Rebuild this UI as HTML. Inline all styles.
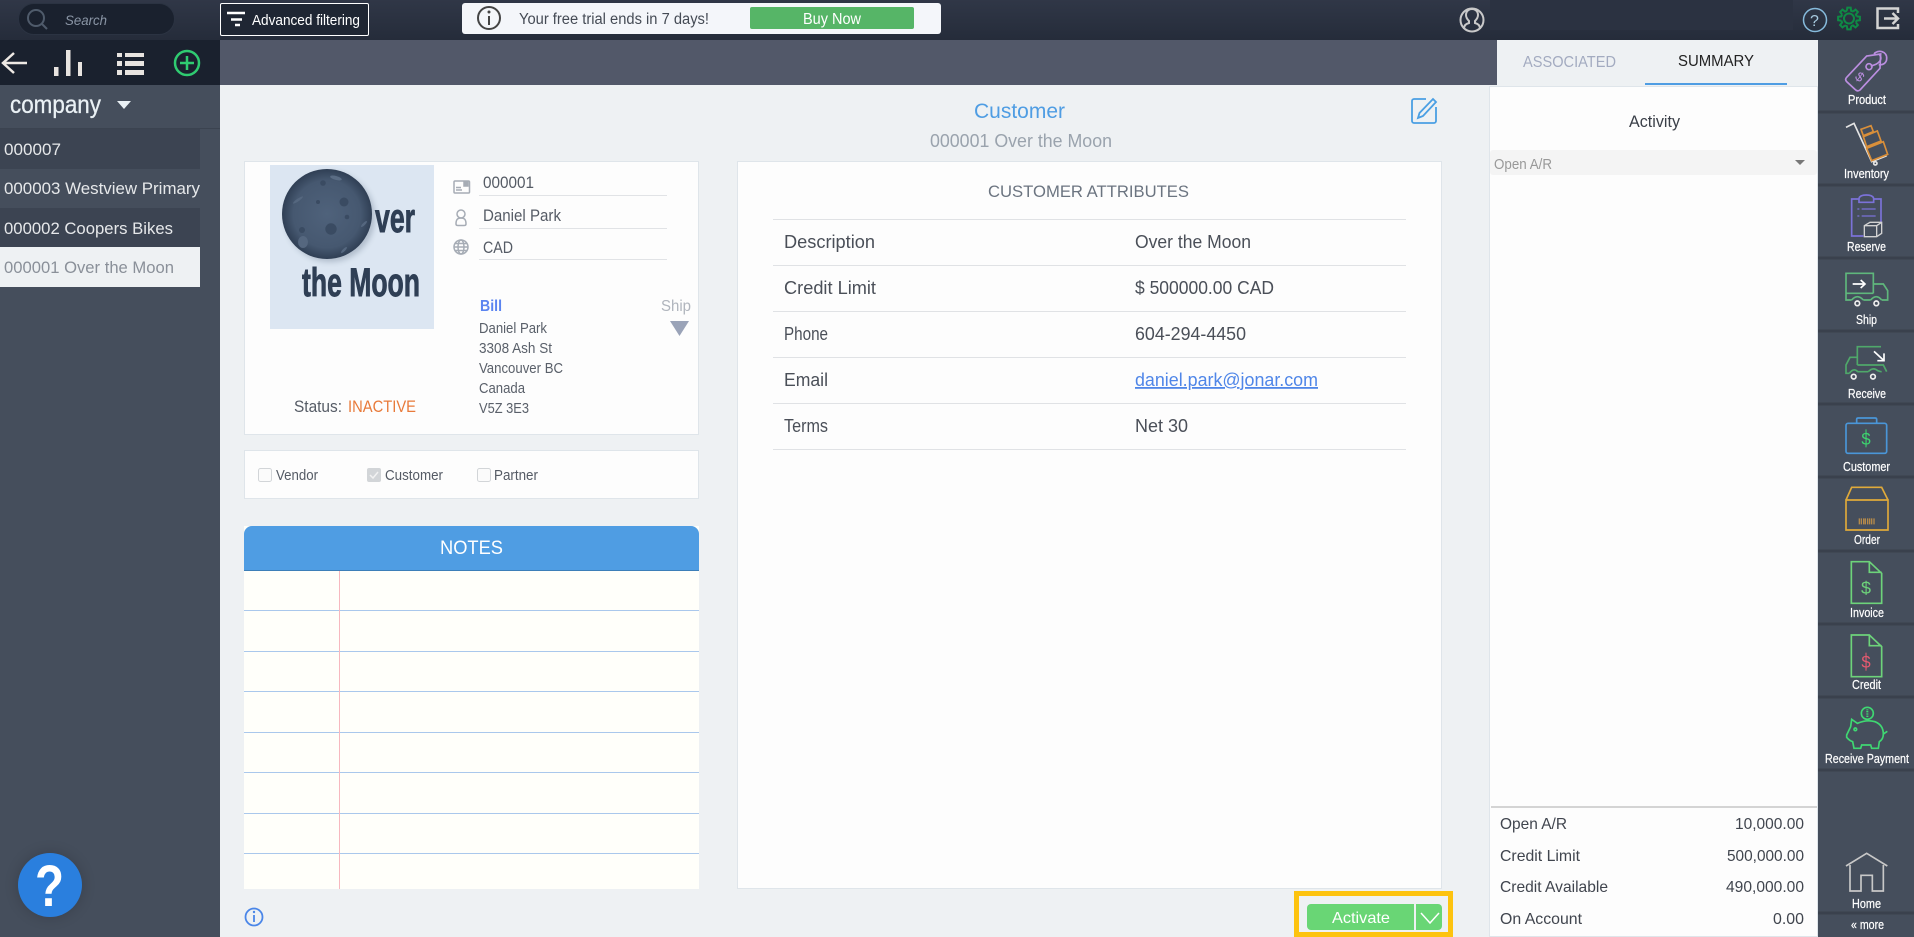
<!DOCTYPE html>
<html lang="en"><head><meta charset="utf-8"><title>Customer</title>
<style>
html,body{margin:0;padding:0;width:1914px;height:937px;overflow:hidden;background:#eef1f3}
.b{position:absolute;box-sizing:border-box}
svg{position:absolute;left:0;top:0}
text{font-family:"Liberation Sans",Arial,sans-serif}
</style></head><body>
<div class="b" style="left:0;top:0;width:1914px;height:40px;background:linear-gradient(#303747,#252c3a)"></div>
<div class="b" style="left:18px;top:3px;width:157px;height:32px;border-radius:16px;background:#1a212e;border:1px solid #2b3342"></div>
<div class="b" style="left:220px;top:3px;width:149px;height:33px;border:1px solid #fff;border-radius:2px;background:#1f2633"></div>
<div class="b" style="left:462px;top:3px;width:479px;height:31px;background:#f4f6fa;border-radius:3px"></div>
<div class="b" style="left:750px;top:7px;width:164px;height:22px;background:#56b567;border-radius:2px"></div>
<div class="b" style="left:1490px;top:0;width:303px;height:30px;background:#2b3241"></div>
<div class="b" style="left:220px;top:40px;width:1277px;height:45px;background:#525869"></div>
<div class="b" style="left:0;top:40px;width:220px;height:45px;background:#1a212e"></div>
<div class="b" style="left:0;top:85px;width:220px;height:852px;background:#454e5c"></div>
<div class="b" style="left:0;top:128px;width:220px;height:1px;background:#3b4350"></div>
<div class="b" style="left:0;top:129px;width:200px;height:40px;background:#3c4452"></div>
<div class="b" style="left:0;top:208px;width:200px;height:39px;background:#3c4452"></div>
<div class="b" style="left:0;top:247px;width:200px;height:40px;background:#eef1f3"></div>
<div class="b" style="left:244px;top:161px;width:455px;height:274px;background:#fdfdfd;border:1px solid #dfe5ea"></div>
<div class="b" style="left:270px;top:165px;width:164px;height:164px;background:#dce6f2"></div>
<div class="b" style="left:244px;top:450px;width:455px;height:49px;background:#fdfdfd;border:1px solid #dfe5ea"></div>
<div class="b" style="left:244px;top:526px;width:455px;height:363px;background:#fffffa"></div>
<div class="b" style="left:244px;top:526px;width:455px;height:45px;background:#4f9de3;border-radius:8px 8px 0 0;border-bottom:1px solid #3d7fb8"></div>
<div class="b" style="left:737px;top:161px;width:705px;height:728px;background:#fdfdfd;border:1px solid #dfe5ea"></div>
<div class="b" style="left:1489px;top:86px;width:329px;height:851px;background:#fdfdfd;border:1px solid #dfe5ea"></div>
<div class="b" style="left:1490px;top:150px;width:327px;height:25px;background:#f4f4f4;border-radius:3px"></div>
<div class="b" style="left:1491px;top:806px;width:326px;height:2px;background:#d4d4d4"></div>
<div class="b" style="left:1645px;top:83px;width:142px;height:2px;background:#4f9de3"></div>
<div class="b" style="left:1818px;top:40px;width:96px;height:897px;background:#454e5c"></div>
<div class="b" style="left:1294px;top:891px;width:159px;height:46px;border:5px solid #fdc30f"></div>
<div class="b" style="left:1307px;top:904px;width:135px;height:26px;background:#69d675;border-radius:4px"></div>
<div class="b" style="left:1414px;top:904px;width:2px;height:26px;background:#eef1f3"></div>
<div class="b" style="left:18px;top:853px;width:64px;height:64px;border-radius:50%;background:#2a7fde;box-shadow:0 0 14px rgba(0,0,0,.18)"></div>

<svg width="1914" height="937" viewBox="0 0 1914 937" xmlns="http://www.w3.org/2000/svg">
<defs>
<radialGradient id="m" cx="50%" cy="50%" r="52%"><stop offset="0" stop-color="#4f627b"/><stop offset=".72" stop-color="#465870"/><stop offset="1" stop-color="#2c3b50"/></radialGradient>
<filter id="bl" x="-30%" y="-30%" width="160%" height="160%"><feGaussianBlur stdDeviation="3"/></filter>
</defs>

<!-- top bar -->
<g fill="none" stroke="#4f5b6b" stroke-width="2"><circle cx="36" cy="18" r="8"/><path d="M42 24l5 5"/></g>
<text x="65" y="25" font-size="14" font-style="italic" fill="#8a95a5" textLength="42" lengthAdjust="spacingAndGlyphs">Search</text>
<path d="M227 13h18M231 19.500h11M235 25h5" stroke="#fff" stroke-width="2.500"/>
<text x="252" y="25" font-size="15" fill="#fff" textLength="108" lengthAdjust="spacingAndGlyphs">Advanced filtering</text>
<circle cx="489" cy="18" r="11" fill="none" stroke="#444" stroke-width="2"/><path d="M489 16v9" stroke="#444" stroke-width="2"/><circle cx="489" cy="12" r="1.500" fill="#444"/>
<text x="519" y="24" font-size="15.500" fill="#454b55" textLength="190" lengthAdjust="spacingAndGlyphs">Your free trial ends in 7 days!</text>
<text x="803" y="24" font-size="15.500" fill="#fff" textLength="58" lengthAdjust="spacingAndGlyphs">Buy Now</text>
<g fill="none" stroke="#c9c9c9" stroke-width="2"><circle cx="1472" cy="20" r="11.500"/><path d="M1464 29c0-4 2-5 5-6v-2c-2-2-3-4-3-6 0-4 3-6 6-6s6 2 6 6c0 2-1 4-3 6v2c3 1 5 2 5 6"/></g>
<circle cx="1815" cy="20" r="11.500" fill="none" stroke="#86bbdc" stroke-width="1.500"/>
<text x="1810" y="26" font-size="16" fill="#a8cbe0">?</text>
<g transform="translate(1849 18.500)" fill="none" stroke="#0f8a45" stroke-width="2">
<circle r="5"/>
<path id="tooth" d="M-2.100 -7.700L-1.700 -10.900H1.700L2.100 -7.700L4 -6.900"/>
<path d="M-2.100 -7.700L-1.700 -10.900H1.700L2.100 -7.700L4 -6.900" transform="rotate(45)"/>
<path d="M-2.100 -7.700L-1.700 -10.900H1.700L2.100 -7.700L4 -6.900" transform="rotate(90)"/>
<path d="M-2.100 -7.700L-1.700 -10.900H1.700L2.100 -7.700L4 -6.900" transform="rotate(135)"/>
<path d="M-2.100 -7.700L-1.700 -10.900H1.700L2.100 -7.700L4 -6.900" transform="rotate(180)"/>
<path d="M-2.100 -7.700L-1.700 -10.900H1.700L2.100 -7.700L4 -6.900" transform="rotate(225)"/>
<path d="M-2.100 -7.700L-1.700 -10.900H1.700L2.100 -7.700L4 -6.900" transform="rotate(270)"/>
<path d="M-2.100 -7.700L-1.700 -10.900H1.700L2.100 -7.700L4 -6.900" transform="rotate(315)"/>
</g>
<path d="M1898 13V8.500h-20.500v19.500H1898v-4M1884 18.500h14M1892.500 13l5.500 5.500-5.500 5.500" fill="none" stroke="#d4d4d4" stroke-width="2.500"/>

<!-- toolbar -->
<path d="M27 63H4M14 53L3 63l11 10" fill="none" stroke="#eee9e4" stroke-width="2.500"/>
<path d="M54 67h4.500v9H54zM66 50h4.500v26H66zM78 62h4v14h-4z" fill="#e8e4e0"/>
<path d="M117 53h5v4h-5zM125 53h19v4h-19zM117 61h5v5h-5zM125 61h19v5h-19zM117 70h5v5h-5zM125 70h19v5h-19z" fill="#e8e4e0"/>
<circle cx="187" cy="63" r="12" fill="none" stroke="#2fcb71" stroke-width="2.500"/><path d="M187 56v14M180 63h14" stroke="#2fcb71" stroke-width="2.500"/>

<!-- sidebar -->
<text x="10" y="113" font-size="25" fill="#eaf1f5" stroke="#eaf1f5" stroke-width=".3" textLength="91" lengthAdjust="spacingAndGlyphs">company</text>
<path d="M117 101h14l-7 8z" fill="#eaf1f5"/>
<g font-size="17" fill="#e6e8ea">
<text x="4" y="155" textLength="57" lengthAdjust="spacingAndGlyphs">000007</text>
<text x="4" y="194" textLength="196" lengthAdjust="spacingAndGlyphs">000003 Westview Primary</text>
<text x="4" y="234" textLength="169" lengthAdjust="spacingAndGlyphs">000002 Coopers Bikes</text>
<text x="4" y="273" textLength="170" lengthAdjust="spacingAndGlyphs" fill="#8a9099">000001 Over the Moon</text>
</g>

<!-- heading -->
<text x="974" y="118" font-size="21" fill="#4f9de3" textLength="91" lengthAdjust="spacingAndGlyphs">Customer</text>
<text x="930" y="147" font-size="18" fill="#9aa3ad" textLength="182" lengthAdjust="spacingAndGlyphs">000001 Over the Moon</text>
<g fill="none" stroke="#4a9fe3" stroke-width="1.800"><path d="M1426 99h-12a2 2 0 0 0-2 2v20a2 2 0 0 0 2 2h20a2 2 0 0 0 2-2v-14"/><path d="M1433 99l3 3-13 14-5 2 1.500-5z"/></g>

<!-- logo -->
<circle cx="330" cy="217" r="45" fill="#7c8a9c" opacity=".45" filter="url(#bl)"/>
<circle cx="327" cy="214" r="45" fill="url(#m)"/>
<g fill="#3a4b62"><circle cx="331" cy="229" r="5.700"/><circle cx="344" cy="202" r="4.500"/><circle cx="347" cy="217" r="2.300"/><circle cx="302" cy="230" r="3"/><ellipse cx="303" cy="242" rx="5" ry="6" fill="#55677f"/><circle cx="318" cy="202" r="2"/><circle cx="323" cy="183" r="2.800"/><ellipse cx="336" cy="178" rx="6" ry="2" fill="#5a6c84" transform="rotate(15 336 178)"/><ellipse cx="298" cy="200" rx="6" ry="1.300" fill="#55677f" transform="rotate(-35 298 200)"/><ellipse cx="364" cy="224" rx="4" ry="1.300" fill="#55677f" transform="rotate(-45 364 224)"/><ellipse cx="344" cy="250" rx="4" ry="1.300" fill="#55677f" transform="rotate(-45 344 250)"/></g>
<text x="375" y="232" font-size="41" font-weight="700" fill="#2f3f55" stroke="#2f3f55" stroke-width=".9" textLength="40" lengthAdjust="spacingAndGlyphs">ver</text>
<text x="302" y="296" font-size="40" font-weight="700" fill="#2f3f55" stroke="#2f3f55" stroke-width=".9" textLength="118" lengthAdjust="spacingAndGlyphs">the Moon</text>

<!-- fields -->
<g fill="none" stroke="#a6acb5" stroke-width="1.500">
<rect x="454" y="181" width="15.500" height="12" rx="1"/><path d="M456 190h6M456 187.500h5"/><rect x="464" y="182" width="4" height="4" fill="#a6acb5"/>
<circle cx="461" cy="214" r="4"/><path d="M456 224c0-5 2-6 5-6s5 1 5 6c0 1-1 1.500-2 1.500h-6c-1 0-2-.5-2-1.500z"/>
<circle cx="461" cy="247" r="7"/><ellipse cx="461" cy="247" rx="3" ry="7"/><path d="M454 247h14M455 243.500h12M455 250.500h12"/>
</g>
<g font-size="17" fill="#555b65">
<text x="483" y="188" textLength="51" lengthAdjust="spacingAndGlyphs">000001</text>
<text x="483" y="221" textLength="78" lengthAdjust="spacingAndGlyphs">Daniel Park</text>
<text x="483" y="253" textLength="30" lengthAdjust="spacingAndGlyphs">CAD</text>
</g>
<path d="M479 195.500h188M479 228.500h188M479 259.500h188" stroke="#e1e3e6"/>
<text x="480" y="311" font-size="16" font-weight="700" fill="#5b84f0" textLength="22" lengthAdjust="spacingAndGlyphs">Bill</text>
<text x="661" y="311" font-size="16" fill="#b0b5bd" textLength="30" lengthAdjust="spacingAndGlyphs">Ship</text>
<path d="M670 321h19l-9.500 15z" fill="#9aa3b8"/>
<g font-size="14.500" fill="#5a606a">
<text x="479" y="333" textLength="68" lengthAdjust="spacingAndGlyphs">Daniel Park</text>
<text x="479" y="353" textLength="73" lengthAdjust="spacingAndGlyphs">3308 Ash St</text>
<text x="479" y="373" textLength="84" lengthAdjust="spacingAndGlyphs">Vancouver BC</text>
<text x="479" y="393" textLength="46" lengthAdjust="spacingAndGlyphs">Canada</text>
<text x="479" y="413" textLength="50" lengthAdjust="spacingAndGlyphs">V5Z 3E3</text>
</g>
<text x="294" y="412" font-size="17" fill="#555b65" textLength="48" lengthAdjust="spacingAndGlyphs">Status:</text>
<text x="348" y="412" font-size="17" fill="#e87a3a" textLength="68" lengthAdjust="spacingAndGlyphs">INACTIVE</text>

<!-- checks -->
<rect x="258.500" y="468.500" width="13" height="13" rx="2" fill="#fbfbfb" stroke="#d2d5d8"/>
<rect x="367" y="468" width="14" height="14" rx="2" fill="#d2d5d8"/><path d="M370 475l3 3 5-6" fill="none" stroke="#f2f2f2" stroke-width="1.500"/>
<rect x="477.500" y="468.500" width="13" height="13" rx="2" fill="#fbfbfb" stroke="#d2d5d8"/>
<g font-size="14.500" fill="#555b65">
<text x="276" y="480" textLength="42" lengthAdjust="spacingAndGlyphs">Vendor</text>
<text x="385" y="480" textLength="58" lengthAdjust="spacingAndGlyphs">Customer</text>
<text x="494" y="480" textLength="44" lengthAdjust="spacingAndGlyphs">Partner</text>
</g>

<!-- notes -->
<text x="440" y="554" font-size="19" fill="#fff" textLength="63" lengthAdjust="spacingAndGlyphs">NOTES</text>
<path d="M244 610.500h455M244 651.500h455M244 691.500h455M244 732.500h455M244 772.500h455M244 813.500h455M244 853.500h455" stroke="#aac8ec"/>
<path d="M339.500 571v318" stroke="#f7b8bf"/>
<circle cx="254" cy="917" r="8.500" fill="none" stroke="#4a86e8" stroke-width="1.800"/><path d="M254 915v7" stroke="#4a86e8" stroke-width="1.800"/><circle cx="254" cy="912" r="1.200" fill="#4a86e8"/>
<text x="35" y="906" font-size="58" font-weight="700" fill="#fff" textLength="29" lengthAdjust="spacingAndGlyphs">?</text>

<!-- attributes -->
<text x="988" y="197" font-size="17" fill="#6b7480" textLength="201" lengthAdjust="spacingAndGlyphs">CUSTOMER ATTRIBUTES</text>
<path d="M773 219.500h633M773 265.500h633M773 311.500h633M773 357.500h633M773 403.500h633M773 449.500h633" stroke="#e0e2e5"/>
<g font-size="18" fill="#4a4f58">
<text x="784" y="248" textLength="91" lengthAdjust="spacingAndGlyphs">Description</text>
<text x="784" y="294" textLength="92" lengthAdjust="spacingAndGlyphs">Credit Limit</text>
<text x="784" y="340" textLength="44" lengthAdjust="spacingAndGlyphs">Phone</text>
<text x="784" y="386" textLength="44" lengthAdjust="spacingAndGlyphs">Email</text>
<text x="784" y="432" textLength="44" lengthAdjust="spacingAndGlyphs">Terms</text>
<text x="1135" y="248" textLength="116" lengthAdjust="spacingAndGlyphs">Over the Moon</text>
<text x="1135" y="294" textLength="139" lengthAdjust="spacingAndGlyphs">$ 500000.00 CAD</text>
<text x="1135" y="340" textLength="111" lengthAdjust="spacingAndGlyphs">604-294-4450</text>
<text x="1135" y="386" textLength="183" lengthAdjust="spacingAndGlyphs" fill="#4f86e8" text-decoration="underline">daniel.park@jonar.com</text>
<text x="1135" y="432" textLength="53" lengthAdjust="spacingAndGlyphs">Net 30</text>
</g>

<!-- right panel -->
<text x="1523" y="67" font-size="16" fill="#a3abc0" textLength="93" lengthAdjust="spacingAndGlyphs">ASSOCIATED</text>
<text x="1678" y="66" font-size="16" fill="#222" textLength="76" lengthAdjust="spacingAndGlyphs">SUMMARY</text>
<text x="1629" y="127" font-size="17" fill="#3a3f48" textLength="51" lengthAdjust="spacingAndGlyphs">Activity</text>
<text x="1494" y="169" font-size="14.500" fill="#999" textLength="58" lengthAdjust="spacingAndGlyphs">Open A/R</text>
<path d="M1795 160h10l-5 5z" fill="#777"/>
<g font-size="16" fill="#40454e">
<text x="1500" y="829" textLength="67" lengthAdjust="spacingAndGlyphs">Open A/R</text>
<text x="1500" y="861" textLength="80" lengthAdjust="spacingAndGlyphs">Credit Limit</text>
<text x="1500" y="892" textLength="108" lengthAdjust="spacingAndGlyphs">Credit Available</text>
<text x="1500" y="924" textLength="82" lengthAdjust="spacingAndGlyphs">On Account</text>
<text x="1735" y="829" textLength="69" lengthAdjust="spacingAndGlyphs">10,000.00</text>
<text x="1727" y="861" textLength="77" lengthAdjust="spacingAndGlyphs">500,000.00</text>
<text x="1726" y="892" textLength="78" lengthAdjust="spacingAndGlyphs">490,000.00</text>
<text x="1773" y="924" textLength="31" lengthAdjust="spacingAndGlyphs">0.00</text>
</g>
<text x="1332" y="923" font-size="16" fill="#fff" textLength="58" lengthAdjust="spacingAndGlyphs">Activate</text>
<path d="M1421 913l9 10 9-10" fill="none" stroke="#fff" stroke-width="1.500"/>

<!-- right nav dividers -->
<path d="M1818 112h96M1818 185h96M1818 258h96M1818 331h96M1818 404h96M1818 477h96M1818 551h96M1818 624h96M1818 697h96M1818 770h96M1818 913h96" stroke="#3a414d" stroke-width="3"/>

<!-- nav icons, in 3x zoomed coordinates -->
<g transform="translate(1800 40) scale(.33333)" fill="none" stroke-width="5">
<g stroke="#bb8ee0"><path d="M140 112L200 48l42-6-2 43-60 65q-8 6-15-2l-25-23q-6-7 0-13z"/><circle cx="207" cy="80" r="9"/><path d="M212 78c25-5 38-20 26-35M222 42c12-15 40-8 38 14 0 12-10 20-24 18"/></g>
<text x="168" y="126" font-size="40" fill="#bb8ee0" stroke="none" transform="rotate(38 182 112)">$</text>
</g>
<g transform="translate(1800 40) scale(.33333)" fill="none" stroke-width="5">
<path d="M138 262l24-12 53 115 45-18" stroke="#e4e4e4"/><circle cx="226" cy="370" r="5" stroke="#e4e4e4"/>
<path d="M183 268l30-11 7 18-30 12zM190 290l42-17 11 30-43 17zM200 325l50-20 13 38-48 19z" stroke="#d98f3a"/>
</g>
<g transform="translate(1800 40) scale(.33333)" fill="none" stroke-width="5">
<path d="M175 477h-20v111h35M222 477h21v73M177 487v-12q3-10 22-10t22 10v12z" stroke="#7b72d8"/>
<path d="M172 507h6M185 507h42M172 528h6M185 528h42" stroke="#7b72d8" stroke-width="4"/>
<path d="M193 557l17-10h35v33l-15 10h-37zM193 557h37l15-10M230 557v33" stroke="#d2d2d2" stroke-width="4"/>
</g>
<g transform="translate(1800 40) scale(.33333)" fill="none" stroke-width="5">
<path d="M138 760v-60h82v60M220 732h30l13 20v28h-18M138 760h82M138 760v20h17M190 780h22" stroke="#5fb77c"/>
<path d="M155 780q17-20 35 0M212 780q17-20 33 0" stroke="#5fb77c"/>
<circle cx="172" cy="790" r="7" stroke="#eee"/><circle cx="229" cy="790" r="7" stroke="#eee"/>
<path d="M158 732h37M182 720l13 12-13 12" stroke="#fff"/>
</g>
<g transform="translate(1800 330) scale(.33333)" fill="none" stroke-width="5">
<path d="M172 105V50h71M172 105h78l10 20M172 82h-22l-12 23v25h10M172 125h33" stroke="#4fa86a"/>
<path d="M148 130q13-18 25-5M205 125q14-15 28-3 8 3 12 3" stroke="#4fa86a"/>
<circle cx="161" cy="140" r="7" stroke="#eee"/><circle cx="219" cy="140" r="7" stroke="#eee"/>
<path d="M222 64l30 28M252 70v22h-20" stroke="#fff"/>
<rect x="138" y="280" width="122" height="90" rx="6" stroke="#4a96d8"/>
<path d="M170 280v-12q0-4 5-4h50q5 0 5 4v12" stroke="#4a96d8"/>
<path d="M198 298v54" stroke="#3dd66f" stroke-width="3"/>
<text x="184" y="344" font-size="50" fill="#3dd66f" stroke="none">$</text>
<path d="M138 510v90h126v-90zM138 510l17-38h90l19 38" stroke="#e0aa3a"/>
<path d="M178 565v18M184 565v18M191 565v18M196 565v18M203 565v18M209 565v18M215 565v18M222 565v18" stroke="#b58a4a" stroke-width="4"/>
<path d="M154 695h54l37 35v90h-91zM208 695v32h37" stroke="#6dd37a"/>
<text x="183" y="792" font-size="54" fill="#6dd37a" stroke="none">$</text>
</g>
<g transform="translate(1800 630) scale(.33333)" fill="none" stroke-width="5">
<path d="M154 15h54l37 35v90h-91zM208 15v32h37" stroke="#6dd37a"/>
<path d="M198 68v54" stroke="#e85a70" stroke-width="3"/>
<text x="184" y="112" font-size="50" fill="#e85a70" stroke="none">$</text>
<circle cx="202" cy="250" r="18" stroke="#3fd872"/><path d="M202 238v24" stroke="#3fd872" stroke-width="6" stroke-dasharray="3 2"/>
<path d="M140 315l12-25 3-22 17 12q28-12 53-5 25 10 25 37 0 16-12 23l-3 20h-20l-3-10h-27l-3 10h-20l-4-20q-10-3-18-13z" stroke="#3fd872"/><path d="M250 312l12-8" stroke="#3fd872"/><circle cx="166" cy="298" r="4" stroke="#3fd872"/>
<path d="M138 708l62-38 62 38M150 705v78h33v-47h34v47h33v-78" stroke="#c8c8c8"/>
</g>
<g font-size="12.500" fill="#fff" stroke="#fff" stroke-width=".2">
<text x="1848" y="104" textLength="38" lengthAdjust="spacingAndGlyphs">Product</text>
<text x="1844" y="178" textLength="45" lengthAdjust="spacingAndGlyphs">Inventory</text>
<text x="1847" y="251" textLength="39" lengthAdjust="spacingAndGlyphs">Reserve</text>
<text x="1856" y="324" textLength="21" lengthAdjust="spacingAndGlyphs">Ship</text>
<text x="1848" y="398" textLength="38" lengthAdjust="spacingAndGlyphs">Receive</text>
<text x="1843" y="471" textLength="47" lengthAdjust="spacingAndGlyphs">Customer</text>
<text x="1854" y="544" textLength="26" lengthAdjust="spacingAndGlyphs">Order</text>
<text x="1850" y="617" textLength="34" lengthAdjust="spacingAndGlyphs">Invoice</text>
<text x="1852" y="689" textLength="29" lengthAdjust="spacingAndGlyphs">Credit</text>
<text x="1825" y="763" textLength="84" lengthAdjust="spacingAndGlyphs">Receive Payment</text>
<text x="1852" y="908" textLength="29" lengthAdjust="spacingAndGlyphs">Home</text>
<text x="1851" y="929" textLength="33" lengthAdjust="spacingAndGlyphs">« more</text>
</g>
</svg>
</body></html>
